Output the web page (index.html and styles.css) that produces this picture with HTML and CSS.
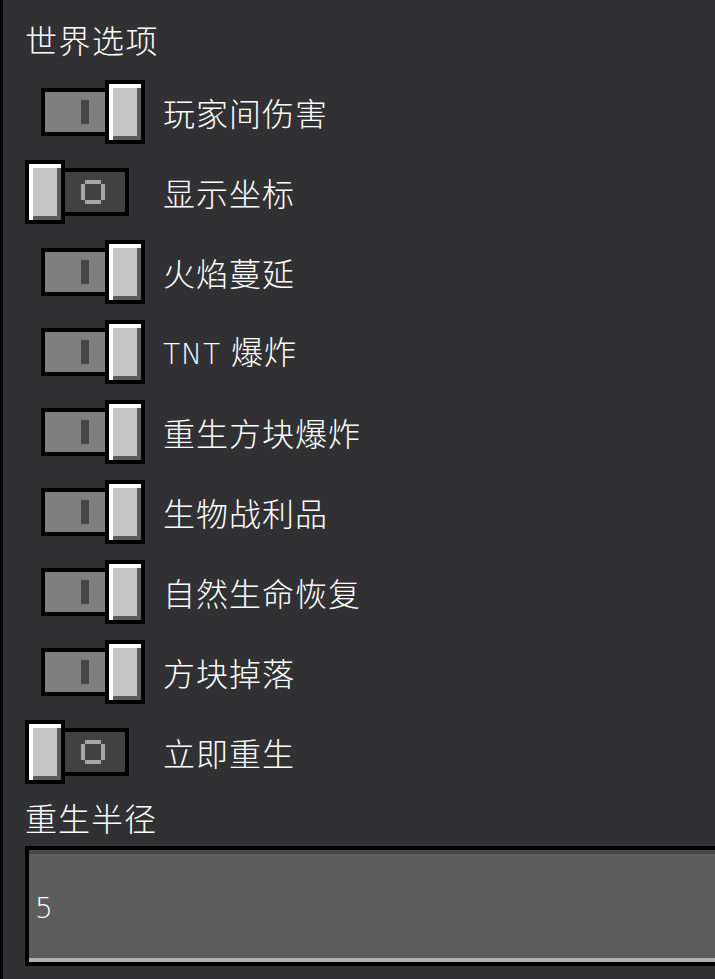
FILE: index.html
```html
<!DOCTYPE html>
<html lang="zh-CN">
<head>
  <meta charset="UTF-8">
  <meta name="viewport" content="width=device-width, initial-scale=1.0">
  <title>世界选项</title>
  <link rel="stylesheet" href="styles.css">
</head>
<body>

<div class="panel">
  <h2 class="title">世界选项</h2>

  <div class="options">
    <div class="row">
      <div class="switch-cell on">
        <div class="track"><span class="bar"></span></div>
        <div class="knob"></div>
      </div>
      <span class="label">玩家间伤害</span>
    </div>

    <div class="row">
      <div class="switch-cell off">
        <div class="knob"></div>
        <div class="track"><svg class="ring" width="24" height="24" viewBox="0 0 24 24"><path d="M4 0h16v4H4zM4 20h16v4H4zM0 4h4v16H0zM20 4h4v16h-4z"/></svg></div>
      </div>
      <span class="label">显示坐标</span>
    </div>

    <div class="row">
      <div class="switch-cell on">
        <div class="track"><span class="bar"></span></div>
        <div class="knob"></div>
      </div>
      <span class="label">火焰蔓延</span>
    </div>

    <div class="row">
      <div class="switch-cell on">
        <div class="track"><span class="bar"></span></div>
        <div class="knob"></div>
      </div>
      <span class="label"><span class="latin">TNT </span>爆炸</span>
    </div>

    <div class="row">
      <div class="switch-cell on">
        <div class="track"><span class="bar"></span></div>
        <div class="knob"></div>
      </div>
      <span class="label">重生方块爆炸</span>
    </div>

    <div class="row">
      <div class="switch-cell on">
        <div class="track"><span class="bar"></span></div>
        <div class="knob"></div>
      </div>
      <span class="label">生物战利品</span>
    </div>

    <div class="row">
      <div class="switch-cell on">
        <div class="track"><span class="bar"></span></div>
        <div class="knob"></div>
      </div>
      <span class="label">自然生命恢复</span>
    </div>

    <div class="row">
      <div class="switch-cell on">
        <div class="track"><span class="bar"></span></div>
        <div class="knob"></div>
      </div>
      <span class="label">方块掉落</span>
    </div>

    <div class="row">
      <div class="switch-cell off">
        <div class="knob"></div>
        <div class="track"><svg class="ring" width="24" height="24" viewBox="0 0 24 24"><path d="M4 0h16v4H4zM4 20h16v4H4zM0 4h4v16H0zM20 4h4v16h-4z"/></svg></div>
      </div>
      <span class="label">立即重生</span>
    </div>
  </div>

  <div class="field-label">重生半径</div>
  <div class="field">
    <div class="field-inner"><span class="latin">5</span></div>
  </div>
</div>

</body>
</html>
```

FILE: styles.css
```css
body {
  margin: 0;
  background-color: #313133;
  overflow: hidden;
  font-family: "Noto Sans CJK SC", "Noto Sans", sans-serif;
  font-weight: 300;
  color: #ffffff;
}

.panel {
  min-height: 979px;
  border-left: 3px solid #000000;
  padding: 23px 0 0 22px;
  box-sizing: border-box;
}

.title {
  margin: 0;
  font-size: 32px;
  font-weight: 300;
  line-height: 32px;
  letter-spacing: 1.5px;
}

.options {
  display: flex;
  flex-direction: column;
  gap: 16px;
  margin-top: 25px;
}

.row {
  display: flex;
  align-items: center;
  gap: 18px;
  height: 64px;
}

.switch-cell {
  width: 120px;
  display: flex;
  align-items: center;
}

.switch-cell.on {
  justify-content: flex-end;
}

.track {
  width: 64px;
  height: 48px;
  box-sizing: border-box;
  border: 4px solid #000000;
  display: flex;
  align-items: center;
}

.on .track {
  border-right: none;
  background-color: #7f7f7f;
  padding-left: 36px;
}

.off .track {
  border-left: none;
  background-color: #424242;
  padding-left: 16px;
}

.bar {
  display: block;
  width: 8px;
  height: 24px;
  background-color: #474747;
}

.ring {
  display: block;
  fill: #a6a6a6;
}

.knob {
  width: 40px;
  height: 64px;
  box-sizing: border-box;
  border: 4px solid #000000;
  background-color: #c6c6c6;
  box-shadow: inset 4px 4px 0 #ffffff, inset -4px -4px 0 #5b5b5b;
}

.label {
  font-size: 32px;
  line-height: 32px;
  letter-spacing: 1px;
  white-space: nowrap;
}

.latin {
  font-family: "DejaVu Sans", sans-serif;
  font-size: 28px;
  font-weight: 200;
  letter-spacing: 1px;
}

.field-label {
  margin-top: 17px;
  font-size: 32px;
  line-height: 32px;
  letter-spacing: 1px;
}

.field {
  margin-top: 13px;
  width: 720px;
  border: 4px solid #000000;
  border-right: none;
}

.field-inner {
  height: 112px;
  box-sizing: border-box;
  border-top: 4px solid #48484c;
  border-bottom: 4px solid #b3b3b3;
  background-color: #5d5d5d;
  display: flex;
  align-items: center;
  padding: 4px 0 0 6px;
}
```
